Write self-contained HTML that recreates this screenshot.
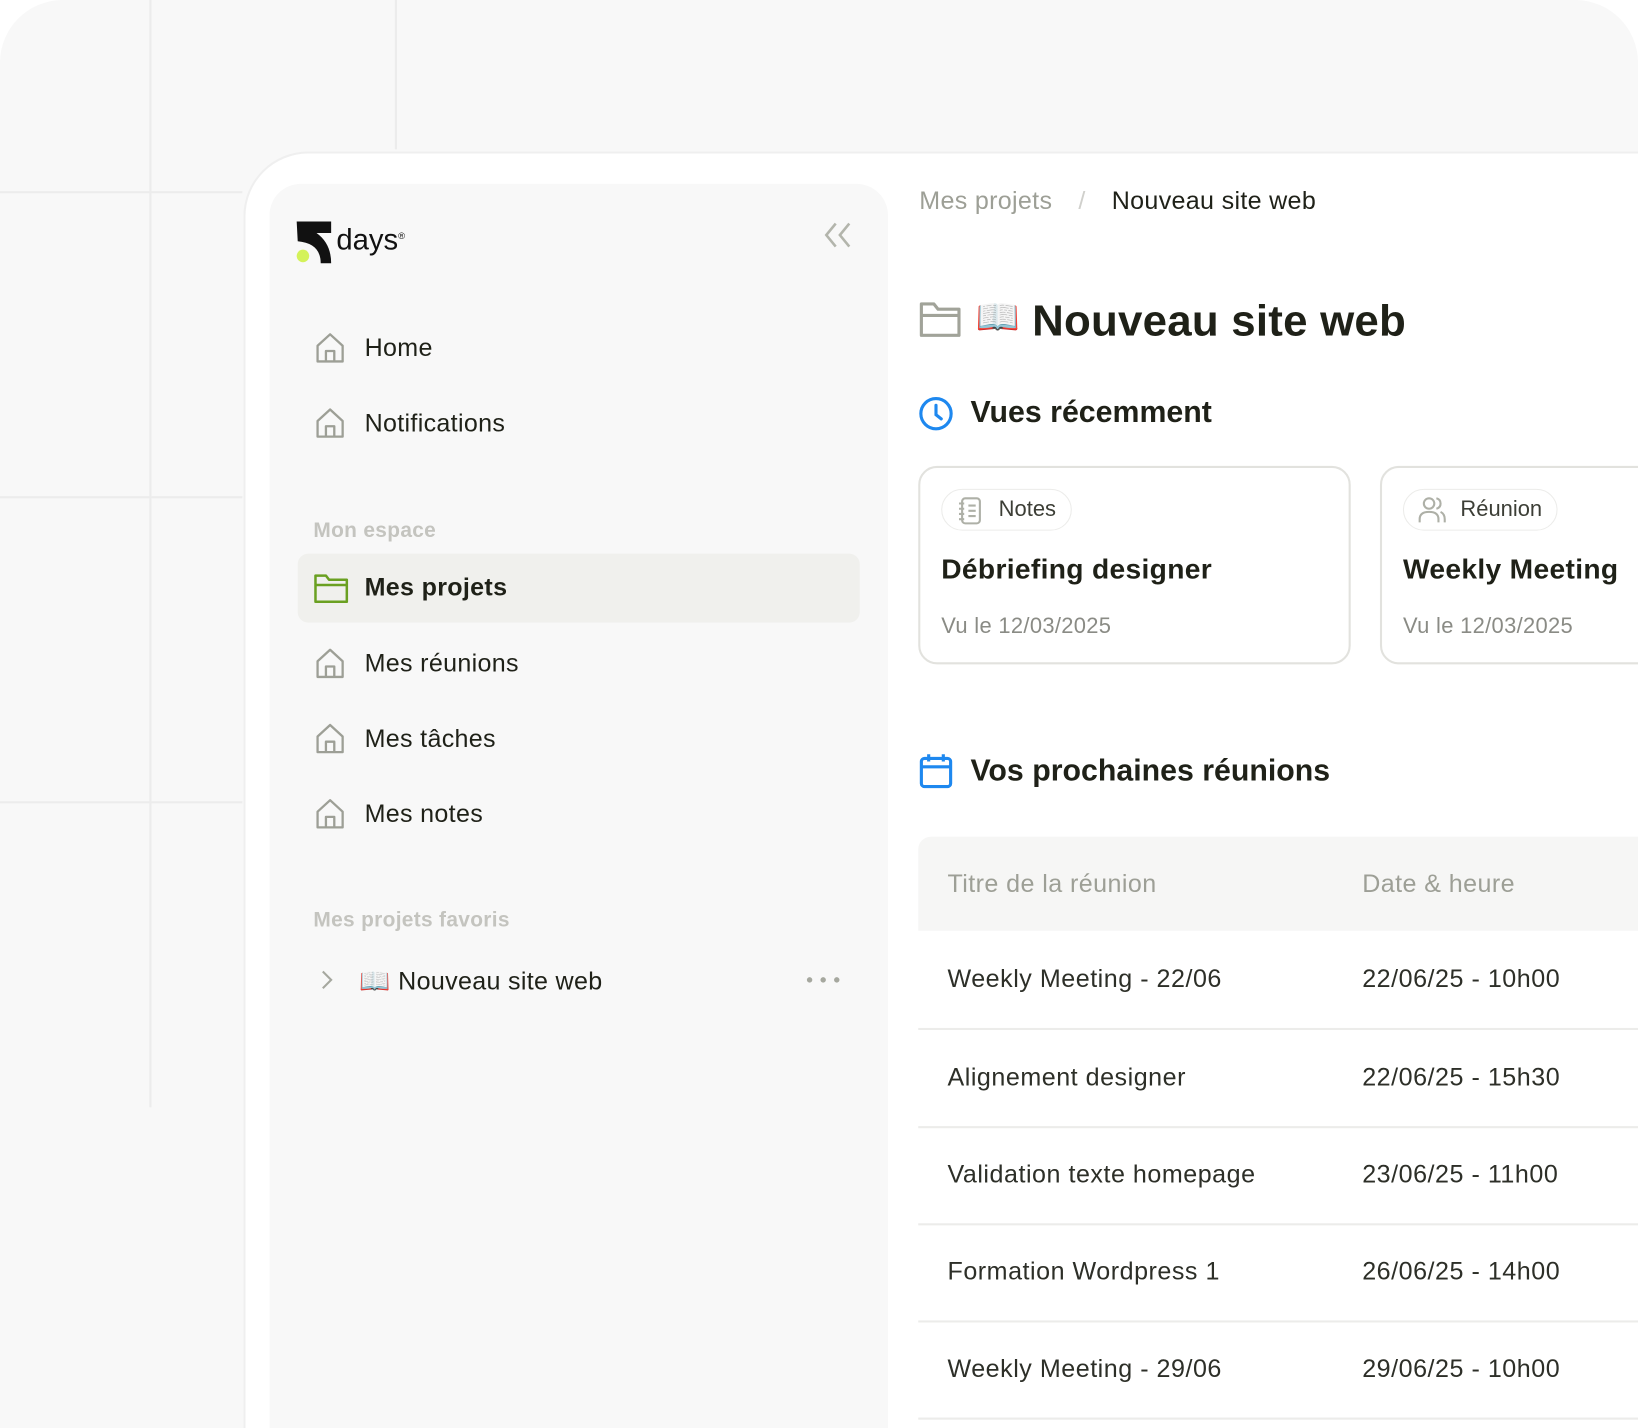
<!DOCTYPE html>
<html><head><meta charset="utf-8">
<style>
html,body{margin:0;padding:0;background:#fff;overflow:hidden}
body{width:1638px;height:1428px;position:relative;font-family:"Liberation Sans",sans-serif;color:#1f2118}
#w{position:absolute;left:0;top:0;width:1568px;height:1367px;transform:scale(1.04464);transform-origin:0 0;overflow:hidden}
.a{position:absolute}
.frame{left:0;top:0;width:1568px;height:1367px;background:#f8f8f8;border-radius:60px 60px 0 0}
.vl{width:2px;background:#ececec}
.hl{height:2px;background:#ececec}
.card{left:233px;top:145px;width:1333px;height:1220px;background:#fff;border-radius:62px 0 0 0;border:2px solid #efefef;border-right:0;border-bottom:0}
.side{left:258px;top:176px;width:592px;height:1191px;background:#f8f8f8;border-radius:30px 30px 0 0}
.nav{font-size:24px;color:#1f2118;white-space:nowrap;letter-spacing:.3px}
.ic{position:absolute}
.lab{font-size:20px;font-weight:bold;color:#c4c4bf;letter-spacing:.3px}
.sec{font-size:29px;font-weight:bold}
.rc{border:2px solid #e2e2de;border-radius:18px;background:#fff;width:410px;height:186px}
.chip{position:absolute;left:20px;top:20px;height:38px;border:1.5px solid #ececea;border-radius:20px;font-size:21px;color:#3c3e36;line-height:38px;padding:0 14px 0 54px}
.ct{position:absolute;left:20px;top:82px;font-size:27px;font-weight:bold;white-space:nowrap;letter-spacing:.3px}
.cd{position:absolute;left:20px;top:140px;font-size:21px;color:#8a8b85;white-space:nowrap;letter-spacing:.3px}
.row{left:879px;width:700px;height:92px;border-bottom:2px solid #ececea;font-size:24px;color:#2d2f28;letter-spacing:.5px}
.row span{position:absolute;top:32px}
</style></head><body><div id="w">
<div class="a frame"></div>
<div class="a vl" style="left:143px;top:0;height:1060px"></div>
<div class="a vl" style="left:378px;top:0;height:143px"></div>
<div class="a hl" style="left:0;top:183px;width:232px"></div>
<div class="a hl" style="left:0;top:475px;width:232px"></div>
<div class="a hl" style="left:0;top:767px;width:232px"></div>
<div class="a card"></div>
<div class="a side"></div>

<svg class="a" style="left:283px;top:211px" width="36" height="42" viewBox="0 0 36 42"><path d="M1 1H34V12H20Q34 22 34 41H24Q24 22 2 20Z" fill="#111"/><circle cx="7" cy="34" r="6" fill="#d4f25a"/></svg>
<div class="a" style="left:322px;top:214px;font-size:28px;color:#111">days<sup style="font-size:9px">®</sup></div>
<svg class="a" style="left:788px;top:212px" width="28" height="26" viewBox="0 0 28 26" fill="none" stroke="#b3b5ac" stroke-width="2.5"><path d="M12 2L3 13L12 24M25 2L16 13L25 24"/></svg>

<svg width="0" height="0" style="position:absolute"><defs><g id="h"><path d="M3 13L15 2L27 13V28H3Z M11 28V18H19V28" fill="none" stroke="#9d9f96" stroke-width="2.2" stroke-linejoin="round"/></g></defs></svg>
<svg class="ic" style="left:301px;top:318px" width="31" height="31"><use href="#h"/></svg>
<div class="a nav" style="left:349px;top:320px">Home</div>
<svg class="ic" style="left:301px;top:390px" width="31" height="31"><use href="#h"/></svg>
<div class="a nav" style="left:349px;top:392px">Notifications</div>
<div class="a lab" style="left:300px;top:497px">Mon espace</div>
<div class="a" style="left:285px;top:530px;width:538px;height:66px;background:#f0f0ed;border-radius:10px"></div>
<svg class="ic" style="left:300px;top:548px" width="34" height="30" viewBox="0 0 34 30" fill="none" stroke="#6aa021" stroke-width="2.4" stroke-linejoin="round"><path d="M2 3H12L15 7H32V28H2Z M2 12H32"/></svg>
<div class="a nav" style="left:349px;top:549px;font-weight:bold">Mes projets</div>
<svg class="ic" style="left:301px;top:620px" width="31" height="31"><use href="#h"/></svg>
<div class="a nav" style="left:349px;top:622px">Mes réunions</div>
<svg class="ic" style="left:301px;top:692px" width="31" height="31"><use href="#h"/></svg>
<div class="a nav" style="left:349px;top:694px">Mes tâches</div>
<svg class="ic" style="left:301px;top:764px" width="31" height="31"><use href="#h"/></svg>
<div class="a nav" style="left:349px;top:766px">Mes notes</div>
<div class="a lab" style="left:300px;top:870px">Mes projets favoris</div>
<svg class="ic" style="left:306px;top:928px" width="14" height="20" fill="none" stroke="#a6a89f" stroke-width="2"><path d="M3 2L11 10L3 18"/></svg>
<div class="a nav" style="left:344px;top:925px">📖&nbsp;Nouveau site web</div>
<svg class="ic" style="left:771px;top:934px" width="34" height="8"><circle cx="4" cy="4" r="2.6" fill="#a6a89f"/><circle cx="17" cy="4" r="2.6" fill="#a6a89f"/><circle cx="30" cy="4" r="2.6" fill="#a6a89f"/></svg>

<div class="a" style="left:880px;top:179px;font-size:24px;color:#9d9f96;white-space:nowrap;letter-spacing:.3px">Mes projets <span style="color:#d0d0cc;margin:0 18px">/</span> <span style="color:#1f2118">Nouveau site web</span></div>
<svg class="ic" style="left:880px;top:288px" width="40" height="36" viewBox="0 0 40 36" fill="none" stroke="#a1a399" stroke-width="3" stroke-linejoin="round"><path d="M2 3H14L18 8H38V33H2Z M2 14H38"/></svg>
<div class="a" style="left:934px;top:284px;font-size:34px">📖</div>
<div class="a" style="left:988px;top:283px;font-size:42px;font-weight:bold;white-space:nowrap;letter-spacing:.2px">Nouveau site web</div>
<svg class="ic" style="left:879px;top:379px" width="34" height="34" viewBox="0 0 34 34" fill="none" stroke="#1e88ef" stroke-width="3"><circle cx="17" cy="17" r="14.5"/><path d="M17 9V18L22 22" stroke-linecap="round"/></svg>
<div class="a sec" style="left:929px;top:379px">Vues récemment</div>

<div class="a rc" style="left:879px;top:446px">
 <div class="chip">Notes</div>
 <svg class="ic" style="left:36px;top:27px" width="24" height="28" viewBox="0 0 24 28" fill="none" stroke="#aeb0a7" stroke-width="2"><rect x="4" y="2" width="17" height="24" rx="3"/><path d="M1 7H6M1 12H6M1 17H6M1 22H6M10 9H17M10 14H17M10 19H17"/></svg>
 <div class="ct">Débriefing designer</div>
 <div class="cd">Vu le 12/03/2025</div>
</div>
<div class="a rc" style="left:1321px;top:446px">
 <div class="chip">Réunion</div>
 <svg class="ic" style="left:34px;top:27px" width="28" height="26" viewBox="0 0 28 26" fill="none" stroke="#aeb0a7" stroke-width="2"><circle cx="11" cy="7" r="5"/><path d="M2 25V22Q2 15 11 15Q20 15 20 22V25M18 2Q22 3 22 7Q22 11 18 12M22 15Q26 17 26 22V25"/></svg>
 <div class="ct">Weekly Meeting</div>
 <div class="cd">Vu le 12/03/2025</div>
</div>

<svg class="ic" style="left:880px;top:721px" width="32" height="34" viewBox="0 0 32 34" fill="none" stroke="#1e88ef" stroke-width="3"><rect x="2" y="5" width="28" height="27" rx="3"/><path d="M2 13H30M9 1V8M23 1V8"/></svg>
<div class="a sec" style="left:929px;top:722px">Vos prochaines réunions</div>

<div class="a" style="left:879px;top:801px;width:700px;height:90px;background:#f6f6f5;border-radius:12px 0 0 0;font-size:24px;color:#9d9f96;letter-spacing:.4px">
 <span class="a" style="left:28px;top:32px">Titre de la réunion</span><span class="a" style="left:425px;top:32px">Date &amp; heure</span></div>
<div class="a row" style="top:892px"><span style="left:28px">Weekly Meeting - 22/06</span><span style="left:425px">22/06/25 - 10h00</span></div>
<div class="a row" style="top:986px"><span style="left:28px">Alignement designer</span><span style="left:425px">22/06/25 - 15h30</span></div>
<div class="a row" style="top:1079px"><span style="left:28px">Validation texte homepage</span><span style="left:425px">23/06/25 - 11h00</span></div>
<div class="a row" style="top:1172px"><span style="left:28px">Formation Wordpress 1</span><span style="left:425px">26/06/25 - 14h00</span></div>
<div class="a row" style="top:1265px"><span style="left:28px">Weekly Meeting - 29/06</span><span style="left:425px">29/06/25 - 10h00</span></div>
</div></body></html>
